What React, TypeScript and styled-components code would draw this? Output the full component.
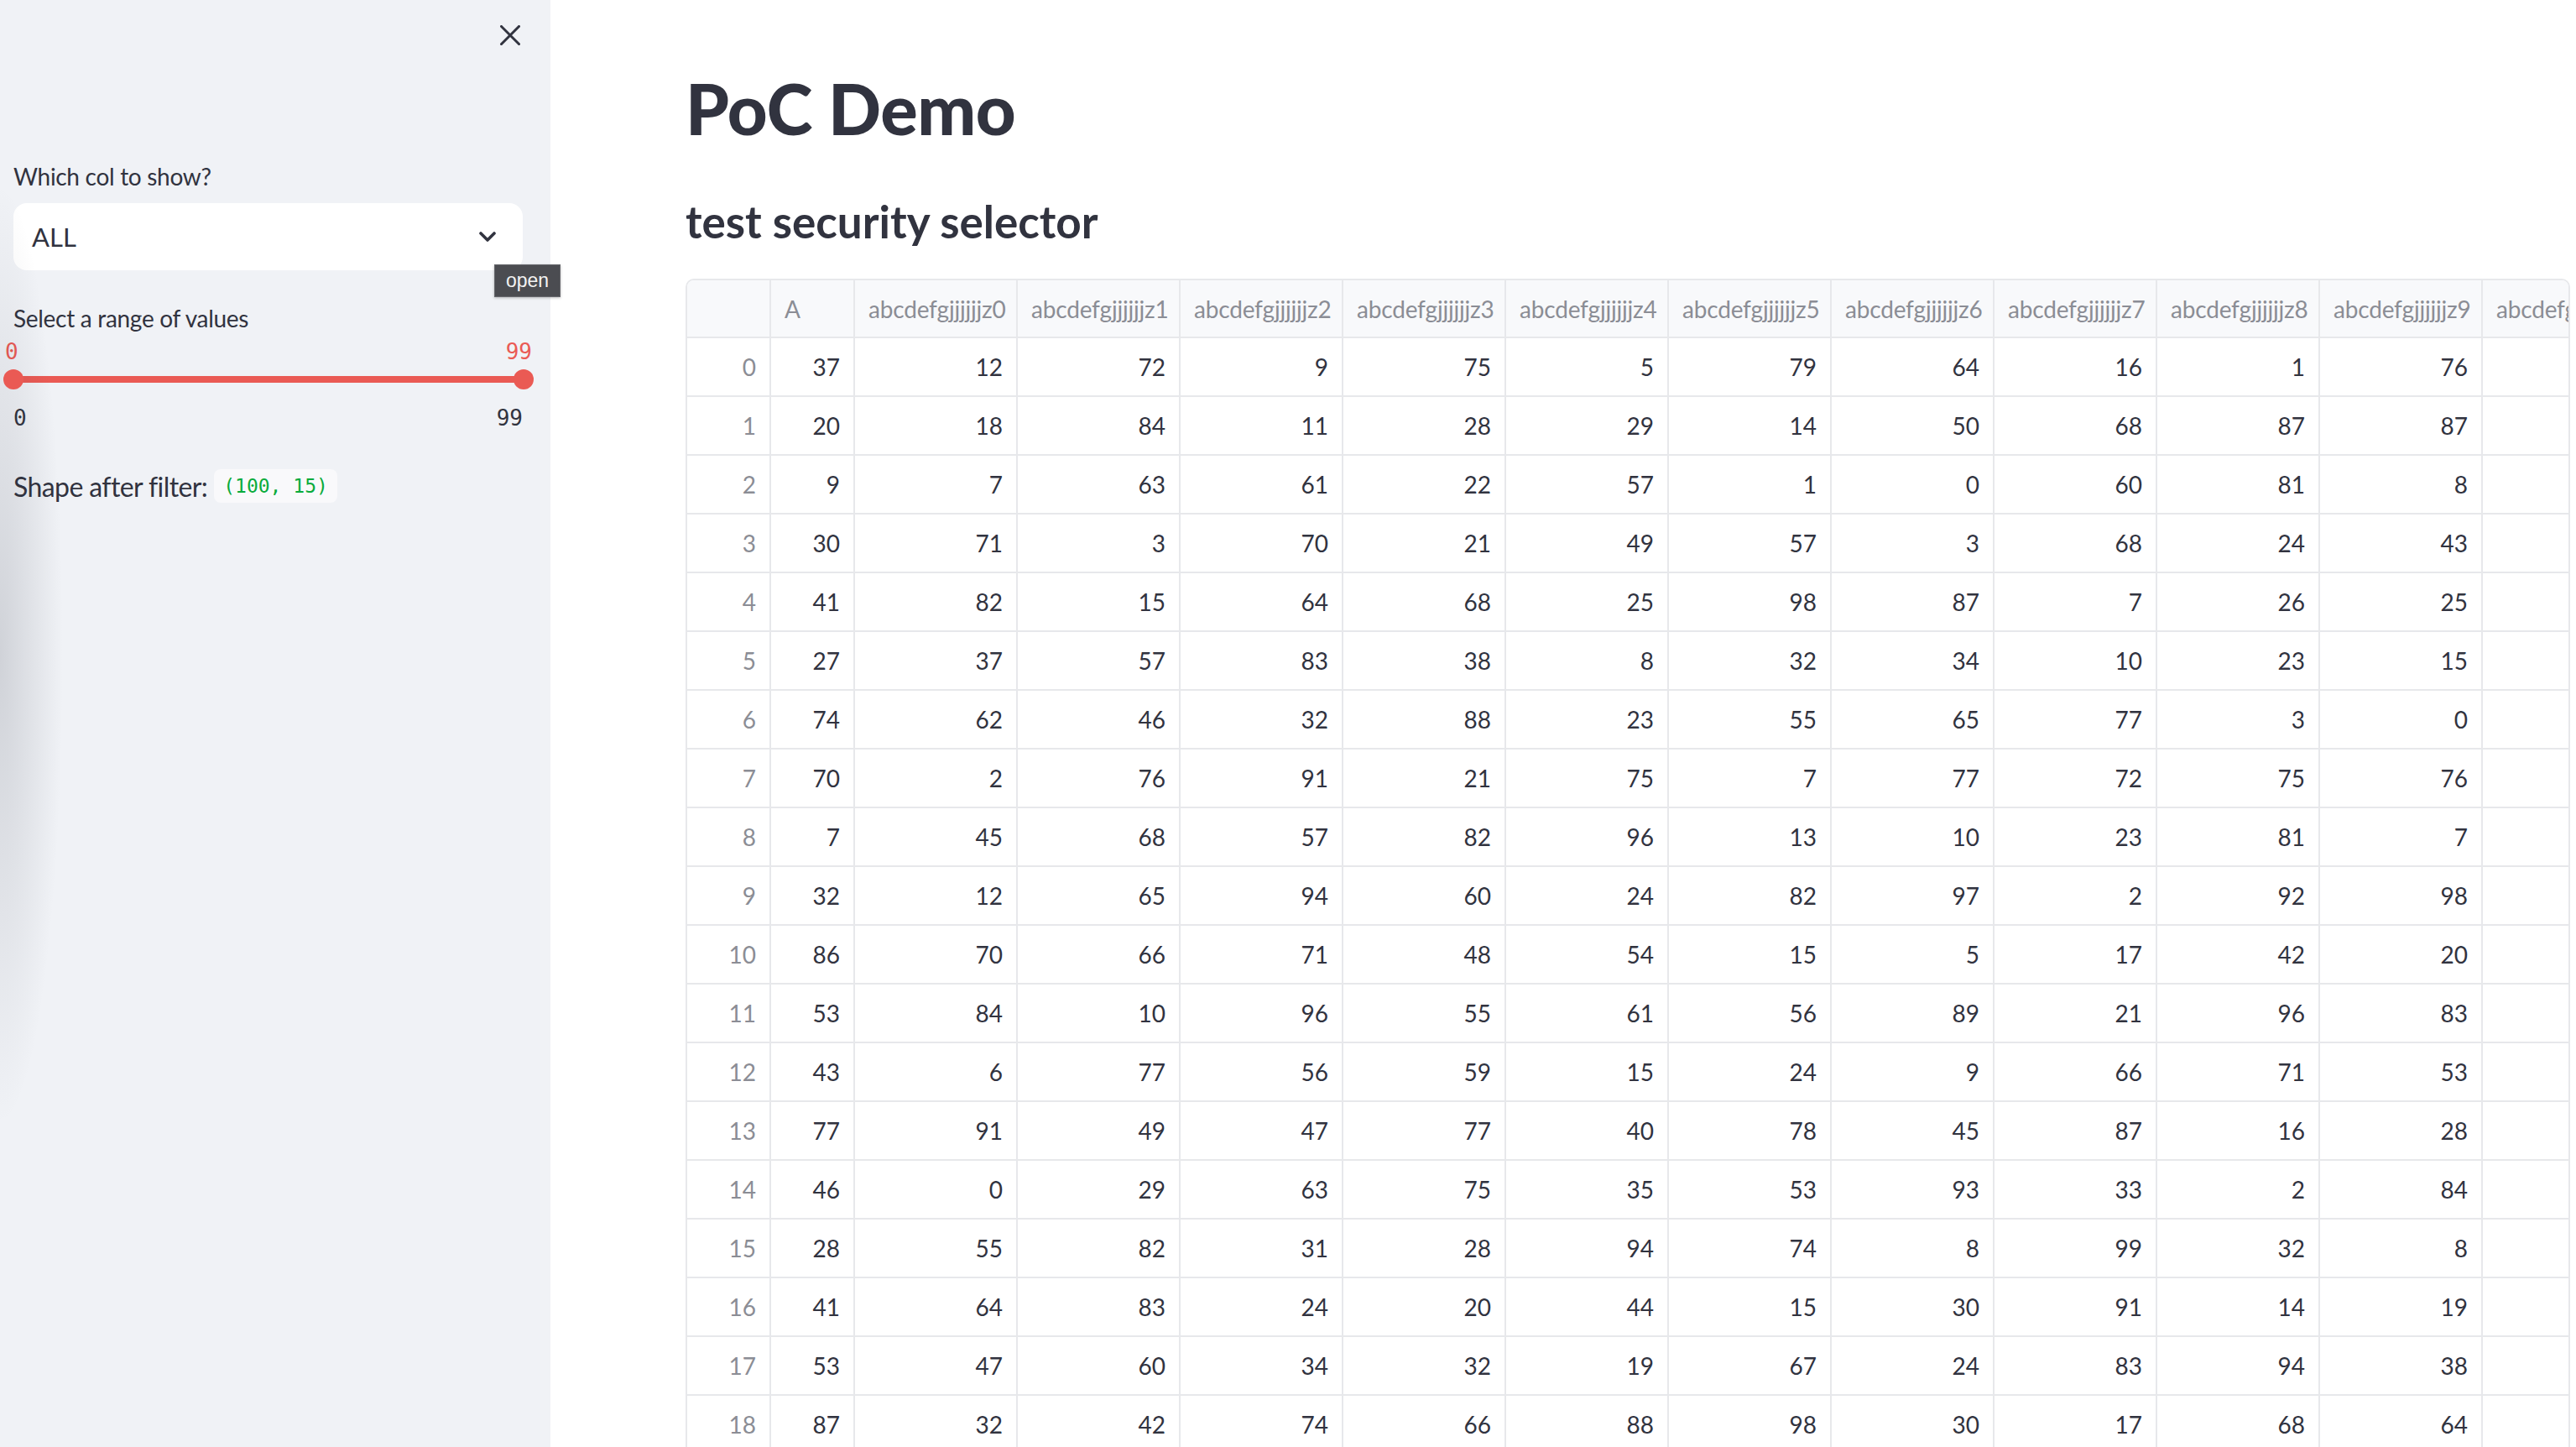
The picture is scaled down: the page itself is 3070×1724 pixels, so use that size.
import React from "react";
import styled, { createGlobalStyle } from "styled-components";

const GlobalStyle = createGlobalStyle`
  html, body {
    margin: 0;
    padding: 0;
    background: #ffffff;
    overflow: hidden;
  }
  body {
    font-family: Lato, "Noto Sans", sans-serif;
    color: #31333f;
  }
  * { box-sizing: border-box; }
`;

const Shell = styled.div`
  position: relative;
  display: flex;
  width: 100vw;
  height: 100vh;
  overflow: hidden;
`;

const Sidebar = styled.aside`
  position: relative;
  flex: 0 0 656px;
  height: 100%;
  background: #f0f2f6;
  &::before {
    content: "";
    position: absolute;
    left: 0;
    top: 180px;
    width: 100px;
    height: 1200px;
    background: radial-gradient(ellipse 75px 560px at 0 50%, rgba(40, 45, 60, 0.16), rgba(40, 45, 60, 0) 100%);
    pointer-events: none;
  }
`;

const SidebarHeader = styled.div`
  height: 84px;
  display: flex;
  align-items: center;
  justify-content: flex-end;
  padding-right: 36px;
`;

const CloseButton = styled.button`
  width: 24px;
  height: 24px;
  padding: 0;
  border: none;
  background: transparent;
  display: flex;
  cursor: pointer;
`;

const SidebarBody = styled.div`
  display: flex;
  flex-direction: column;
  padding: 104px 33px 0 16px;
`;

const WidgetLabel = styled.div<{ $gap?: number }>`
  height: 44px;
  line-height: 44px;
  font-size: 28px;
  letter-spacing: -0.3px;
  color: #31333f;
  margin-top: ${(p) => p.$gap ?? 0}px;
  white-space: nowrap;
`;

const SelectBox = styled.div`
  margin-top: 10px;
  height: 80px;
  border-radius: 16px;
  background: #ffffff;
  display: flex;
  align-items: center;
  justify-content: space-between;
  padding: 0 32px 0 22px;
  font-size: 31px;
  color: #31333f;
`;

const ValueRow = styled.div<{ $accent?: boolean; $gap: number; $bleedL?: number; $bleedR?: number }>`
  display: flex;
  justify-content: space-between;
  height: 26px;
  line-height: 26px;
  margin-top: ${(p) => p.$gap}px;
  margin-left: ${(p) => -(p.$bleedL ?? 0)}px;
  margin-right: ${(p) => -(p.$bleedR ?? 0)}px;
  font-family: "DejaVu Sans Mono", "Liberation Mono", monospace;
  font-size: 26px;
  color: ${(p) => (p.$accent ? "#ea5a54" : "#31333f")};
`;

const TrackRow = styled.div`
  display: flex;
  align-items: center;
  height: 24px;
  margin: 8px -13px 0 -12px;
`;

const Thumb = styled.div`
  position: relative;
  z-index: 1;
  flex: 0 0 24px;
  height: 24px;
  border-radius: 50%;
  background: #ea5a54;
`;

const TrackBar = styled.div`
  flex: 1;
  height: 8px;
  margin: 0 -12px;
  background: #ea5a54;
`;

const ShapeRow = styled.div`
  display: flex;
  align-items: center;
  height: 40px;
  margin-top: 48px;
  font-size: 32px;
  letter-spacing: -0.6px;
  color: #31333f;
  white-space: nowrap;
`;

const InlineCode = styled.code`
  margin-left: 8px;
  height: 40px;
  line-height: 40px;
  padding: 0 11px;
  border-radius: 8px;
  background: #f9f9fb;
  color: #09ab3b;
  letter-spacing: 0;
  font-family: "DejaVu Sans Mono", "Liberation Mono", monospace;
  font-size: 23px;
`;

const Tooltip = styled.div`
  position: absolute;
  left: 589px;
  top: 315px;
  width: 79px;
  height: 39px;
  display: flex;
  align-items: center;
  justify-content: center;
  background: #4b4c51;
  border: 1px solid #66676c;
  box-shadow: 0 1px 3px rgba(0, 0, 0, 0.25);
  color: #f2f2f2;
  font-family: "Liberation Sans", Arial, sans-serif;
  font-size: 23px;
  z-index: 5;
`;

const Main = styled.main`
  flex: 1;
  min-width: 0;
  height: 100%;
  padding: 80px 7px 0 161px;
  display: flex;
  flex-direction: column;
  background: #ffffff;
`;

const Title = styled.h1`
  margin: 0;
  font-size: 83px;
  line-height: 1.2;
  font-weight: 900;
  color: #31333f;
  letter-spacing: -0.5px;
`;

const Subheader = styled.h3`
  margin: 52px 0 0 0;
  font-size: 53px;
  line-height: 1.2;
  font-weight: 700;
  color: #31333f;
`;

const TableFrame = styled.div`
  margin-top: 37px;
  border: 2px solid #e7e8eb;
  border-radius: 10px;
  overflow: hidden;
  background: #ffffff;
  flex-shrink: 0;
`;

const GridRow = styled.div<{ $header?: boolean }>`
  display: grid;
  grid-template-columns: 100px 100px repeat(11, 194px);
  height: ${(p) => (p.$header ? 69 : 70)}px;
  background: ${(p) => (p.$header ? "#f8f9fb" : "#ffffff")};
`;

const Cell = styled.div<{ $kind: "head" | "index" | "data" }>`
  display: flex;
  align-items: center;
  justify-content: ${(p) => (p.$kind === "head" ? "flex-start" : "flex-end")};
  padding: 0 16px;
  border-right: 2px solid #e7e8eb;
  border-bottom: 2px solid #e7e8eb;
  font-size: 28px;
  letter-spacing: ${(p) => (p.$kind === "head" ? "-0.2px" : "0")};
  white-space: nowrap;
  overflow: hidden;
  color: ${(p) => (p.$kind === "data" ? "#31333f" : "#8b8d95")};
`;

const data: number[][] = [
  [37, 12, 72, 9, 75, 5, 79, 64, 16, 1, 76],
  [20, 18, 84, 11, 28, 29, 14, 50, 68, 87, 87],
  [9, 7, 63, 61, 22, 57, 1, 0, 60, 81, 8],
  [30, 71, 3, 70, 21, 49, 57, 3, 68, 24, 43],
  [41, 82, 15, 64, 68, 25, 98, 87, 7, 26, 25],
  [27, 37, 57, 83, 38, 8, 32, 34, 10, 23, 15],
  [74, 62, 46, 32, 88, 23, 55, 65, 77, 3, 0],
  [70, 2, 76, 91, 21, 75, 7, 77, 72, 75, 76],
  [7, 45, 68, 57, 82, 96, 13, 10, 23, 81, 7],
  [32, 12, 65, 94, 60, 24, 82, 97, 2, 92, 98],
  [86, 70, 66, 71, 48, 54, 15, 5, 17, 42, 20],
  [53, 84, 10, 96, 55, 61, 56, 89, 21, 96, 83],
  [43, 6, 77, 56, 59, 15, 24, 9, 66, 71, 53],
  [77, 91, 49, 47, 77, 40, 78, 45, 87, 16, 28],
  [46, 0, 29, 63, 75, 35, 53, 93, 33, 2, 84],
  [28, 55, 82, 31, 28, 94, 74, 8, 99, 32, 8],
  [41, 64, 83, 24, 20, 44, 15, 30, 91, 14, 19],
  [53, 47, 60, 34, 32, 19, 67, 24, 83, 94, 38],
  [87, 32, 42, 74, 66, 88, 98, 30, 17, 68, 64],
];

const columns = ["A", ...Array.from({ length: 11 }, (_, i) => `abcdefgjjjjjjz${i}`)];

const CloseIcon = () => (
  <svg width="24" height="24" viewBox="0 0 24 24" fill="none">
    <path d="M1.5 1.5 L22.5 22.5 M22.5 1.5 L1.5 22.5" stroke="#31333f" strokeWidth="3" strokeLinecap="square" />
  </svg>
);

const Chevron = () => (
  <svg width="20" height="13" viewBox="0 0 20 13" fill="none">
    <path d="M2 2 L10 10 L18 2" stroke="#31333f" strokeWidth="3.6" strokeLinecap="round" strokeLinejoin="round" />
  </svg>
);

export default function App() {
  return (
    <>
      <GlobalStyle />
      <Shell>
        <Sidebar>
          <SidebarHeader>
            <CloseButton aria-label="Close sidebar">
              <CloseIcon />
            </CloseButton>
          </SidebarHeader>
          <SidebarBody>
            <WidgetLabel>Which col to show?</WidgetLabel>
            <SelectBox>
              <span>ALL</span>
              <Chevron />
            </SelectBox>
            <WidgetLabel $gap={35}>Select a range of values</WidgetLabel>
            <ValueRow $accent $gap={5} $bleedL={10} $bleedR={11}>
              <span>0</span>
              <span>99</span>
            </ValueRow>
            <TrackRow>
              <Thumb />
              <TrackBar />
              <Thumb />
            </TrackRow>
            <ValueRow $gap={21}>
              <span>0</span>
              <span>99</span>
            </ValueRow>
            <ShapeRow>
              Shape after filter:
              <InlineCode>(100, 15)</InlineCode>
            </ShapeRow>
          </SidebarBody>
        </Sidebar>
        <Main>
          <Title>PoC Demo</Title>
          <Subheader>test security selector</Subheader>
          <TableFrame>
            <GridRow $header>
              <Cell $kind="head" />
              {columns.map((c) => (
                <Cell key={c} $kind="head">
                  {c}
                </Cell>
              ))}
            </GridRow>
            {data.map((row, r) => (
              <GridRow key={r}>
                <Cell $kind="index">{r}</Cell>
                {row.map((v, c) => (
                  <Cell key={c} $kind="data">
                    {v}
                  </Cell>
                ))}
                <Cell $kind="data" />
              </GridRow>
            ))}
          </TableFrame>
        </Main>
        <Tooltip>open</Tooltip>
      </Shell>
    </>
  );
}
